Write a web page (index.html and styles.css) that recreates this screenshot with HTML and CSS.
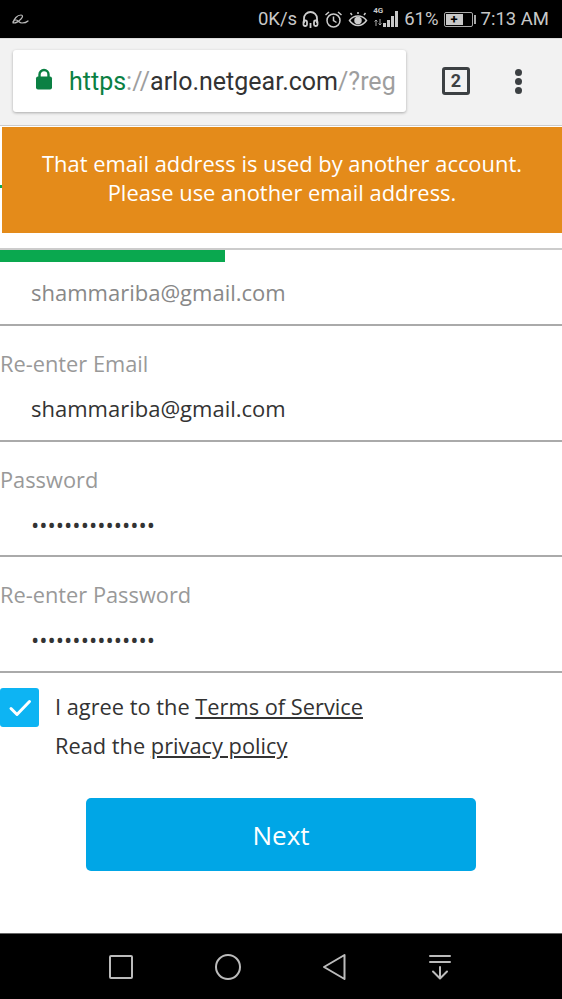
FILE: index.html
```html
<!DOCTYPE html>
<html lang="en">
<head>
  <meta charset="UTF-8" />
  <meta name="viewport" content="width=device-width, initial-scale=1.0"/>
  <title>Arlo Registration</title>
  <link rel="stylesheet" href="styles.css">
</head>
<body>
  <div class="phone">
    <div class="statusBar">
      <svg class="appIcon" width="18" height="12" viewBox="0 0 18 12" fill="none" stroke="#bbb" stroke-width="1.2" stroke-linecap="round">
        <path d="M1 10C2 6 5 2 9 2c2 0 2 2 0 4-2 2-5 4-7 4s-1-3 2-3c2 0 3 3 6 3 2 0 5-1 6-2"/>
      </svg>
      <div class="statusRight">
        <span class="speed">0K/s</span>
        <svg width="17" height="19" viewBox="0 0 17 19" fill="none" stroke="#ccc" stroke-width="1.8">
          <path d="M2 13V8.500a6.500 6.500 0 0 1 13 0V13"/>
          <rect x="1.500" y="10.500" width="3.500" height="5.500" rx="1.500"/>
          <rect x="12" y="10.500" width="3.500" height="5.500" rx="1.500"/>
          <path d="M8.500 13v5"/>
        </svg>
        <svg width="19" height="19" viewBox="0 0 19 19" fill="none" stroke="#ccc" stroke-width="1.5">
          <circle cx="9.500" cy="10.500" r="6.500"/>
          <path d="M9.500 6.500v4l3 2M1.500 5l3.500-3M17.500 5L14 2"/>
        </svg>
        <svg width="20" height="16" viewBox="0 0 20 16" fill="none" stroke="#ccc" stroke-width="1.500">
          <path d="M1.500 9.500C4 6 7 5 10 5s6 1 8.500 4.500C16 13 13 14.500 10 14.500S4 13 1.500 9.500z"/>
          <circle cx="10" cy="9.500" r="3" fill="#ccc"/>
          <path d="M4 4L2.500 2M10 3V1M16 4l1.500-2"/>
        </svg>
        <span class="signal">
          <span class="netType">4G</span>
          <svg class="netArrows" width="8" height="7" viewBox="0 0 8 7" fill="none" stroke="#aaa" stroke-width="1">
            <path d="M2 7V1M0.500 2.500L2 1l1.500 1.500M6 0v6M4.500 4.500L6 6l1.500-1.500"/>
          </svg>
          <span class="bars"><i class="b1"></i><i class="b2"></i><i class="b3"></i><i class="b4"></i></span>
        </span>
        <span class="percent">61%</span>
        <span class="battery"><span class="batteryBody"><span class="batteryFill">+</span></span><span class="batteryTip"></span></span>
        <span class="clock">7:13 AM</span>
      </div>
    </div>

    <div class="toolbar">
      <div class="urlBox">
        <svg class="lock" width="18" height="22" viewBox="0 0 18 22">
          <path d="M4.500 10V6.500a4.500 4.500 0 0 1 9 0V10" fill="none" stroke="#0b8043" stroke-width="2.400"/>
          <rect x="1" y="8.500" width="16" height="13" rx="2" fill="#0b8043"/>
        </svg>
        <span class="url"><span class="scheme">https</span><span class="slashes">://</span>arlo.netgear.com<span class="path">/?reg</span></span>
      </div>
      <div class="tabCount">2</div>
      <div class="menuDots"><i></i><i></i><i></i></div>
    </div>

    <main class="page">
      <div class="alert">That email address is used by another account.<br>Please use another email address.</div>
      <div class="progressTick"></div>

      <div class="progress"><div class="progressBar"></div></div>

      <div class="field first">
        <div class="value muted">shammariba@gmail.com</div>
      </div>
      <div class="field">
        <label>Re-enter Email</label>
        <div class="value">shammariba@gmail.com</div>
      </div>
      <div class="field">
        <label>Password</label>
        <div class="value dots">•••••••••••••••</div>
      </div>
      <div class="field">
        <label>Re-enter Password</label>
        <div class="value dots">•••••••••••••••</div>
      </div>

      <div class="agree">
        <div class="checkbox">
          <svg width="24" height="20" viewBox="0 0 24 20" fill="none" stroke="#fff" stroke-width="3" stroke-linecap="round" stroke-linejoin="round">
            <path d="M3 10.500l6 6L21.500 3.500"/>
          </svg>
        </div>
        <div class="agreeText">
          <div class="agreeLine">I agree to the <a href="#">Terms of Service</a></div>
          <div class="agreeLine">Read the <a href="#">privacy policy</a></div>
        </div>
      </div>

      <button class="next" type="button">Next</button>
    </main>

    <div class="navBar">
      <svg width="26" height="26" viewBox="0 0 26 26" fill="none" stroke="#bbb" stroke-width="2" stroke-linejoin="round">
        <rect x="2" y="2" width="22" height="22" rx="1"/>
      </svg>
      <svg width="28" height="28" viewBox="0 0 28 28" fill="none" stroke="#bbb" stroke-width="2">
        <circle cx="14" cy="14" r="12"/>
      </svg>
      <svg width="26" height="28" viewBox="0 0 26 28" fill="none" stroke="#bbb" stroke-width="2" stroke-linejoin="round">
        <path d="M22.500 2L2 14l20.500 12z"/>
      </svg>
      <svg width="24" height="28" viewBox="0 0 24 28" fill="none" stroke="#bbb" stroke-width="2" stroke-linecap="round" stroke-linejoin="round">
        <path d="M2 3h20M2 9h20M12 14v11M5 18.500l7 7 7-7"/>
      </svg>
    </div>
  </div>
</body>
</html>
```

FILE: styles.css
```css
* {
  box-sizing: border-box;
}
body {
  margin: 0;
  background: #fff;
  font-family: "Open Sans", sans-serif;
  color: #333;
}
.phone {
  width: 562px;
  height: 999px;
  display: flex;
  flex-direction: column;
  overflow: hidden;
}

/* status bar */
.statusBar {
  height: 38px;
  flex: none;
  background: #000;
  display: flex;
  align-items: center;
  justify-content: space-between;
  padding: 0 13px 0 12px;
  font-family: Roboto, sans-serif;
  color: #c8c8c8;
}
.statusRight {
  display: flex;
  align-items: center;
  gap: 5px;
}
.speed, .percent, .clock {
  font-size: 18.5px;
  line-height: 38px;
}
.signal {
  width: 26px;
  height: 20px;
  margin-top: -4px;
  display: flex;
  align-items: flex-end;
  position: relative;
}
.netType {
  position: absolute;
  left: 0;
  top: -1px;
  font-size: 8px;
  line-height: 10px;
  font-weight: bold;
}
.netArrows {
  position: absolute;
  left: 1px;
  bottom: 1px;
}
.bars {
  margin-left: 10px;
  display: flex;
  align-items: flex-end;
  gap: 1.5px;
}
.bars i {
  display: block;
  width: 2.500px;
  background: #c8c8c8;
}
.b1 { height: 4px; }
.b2 { height: 7px; }
.b3 { height: 11px; }
.b4 { height: 16px; }
.battery {
  display: flex;
  align-items: center;
  gap: 1px;
}
.batteryBody {
  width: 29px;
  height: 15px;
  border: 1px solid #aaa;
  border-radius: 2px;
  padding: 1px;
  display: flex;
}
.batteryFill {
  width: 17px;
  background: #c8c8c8;
  color: #000;
  font-size: 13px;
  line-height: 11px;
  font-weight: bold;
  text-align: center;
}
.batteryTip {
  width: 2px;
  height: 9px;
  background: #aaa;
}

/* browser toolbar */
.toolbar {
  height: 88px;
  flex: none;
  background: #f2f2f2;
  border-top: 1px solid #ddd;
  border-bottom: 1px solid #ccc;
  display: flex;
  align-items: center;
  padding: 0 0 2px 13px;
  font-family: Roboto, sans-serif;
}
.urlBox {
  width: 393px;
  height: 62px;
  background: #fff;
  border-radius: 3px;
  box-shadow: 0 1px 3px rgba(0, 0, 0, 0.3);
  display: flex;
  align-items: center;
  padding-left: 22px;
  overflow: hidden;
}
.lock {
  flex: none;
  margin-top: -4px;
}
.url {
  margin-left: 16px;
  font-size: 25px;
  color: #333;
  white-space: nowrap;
}
.scheme {
  color: #0b8043;
}
.slashes, .path {
  color: #9e9e9e;
}
.tabCount {
  width: 28px;
  height: 28px;
  margin-left: 36px;
  border: 3px solid #3c4043;
  border-radius: 3px;
  font-size: 18px;
  line-height: 22px;
  font-weight: bold;
  text-align: center;
  color: #3c4043;
}
.menuDots {
  margin-left: 45px;
  display: flex;
  flex-direction: column;
  gap: 2px;
}
.menuDots i {
  display: block;
  width: 7px;
  height: 7px;
  border-radius: 50%;
  background: #3c4043;
}

/* page */
.page {
  flex: 1;
  position: relative;
  padding-top: 122px;
  background: #fff;
}
.alert {
  position: absolute;
  left: 2px;
  top: 1px;
  right: 0;
  height: 106px;
  background: #e48b1a;
  color: #fff;
  font-size: 21.9px;
  line-height: 29px;
  text-align: center;
  padding-top: 22px;
}
.progressTick {
  position: absolute;
  left: 0;
  top: 59px;
  width: 2px;
  height: 3px;
  background: #0aa84f;
}
.progress {
  height: 14px;
  border-top: 2px solid #ccc;
}
.progressBar {
  width: 225px;
  height: 12px;
  background: #0aa84f;
}
.field {
  height: 115.5px;
  border-bottom: 2px solid #aaa;
  padding-top: 24px;
}
.field.first {
  height: 64px;
  padding-top: 16px;
}
.field label {
  display: block;
  font-size: 21.8px;
  line-height: 27px;
  color: #999;
}
.value {
  margin-top: 17px;
  padding-left: 31px;
  font-size: 22px;
  line-height: 28px;
  color: #333;
}
.field.first .value {
  margin-top: 0;
}
.value.muted {
  color: #888;
}
.agree {
  display: flex;
  gap: 16px;
  padding-top: 15.5px;
}
.checkbox {
  width: 39px;
  height: 39px;
  flex: none;
  background: #0db4f3;
  border-radius: 3px;
  display: flex;
  align-items: center;
  justify-content: center;
}
.agreeText {
  margin-top: -1px;
}
.agreeLine {
  font-size: 21.8px;
  line-height: 39px;
  color: #333;
}
.agreeLine a {
  color: #333;
  text-decoration: underline;
}
.next {
  display: block;
  width: 390px;
  height: 73px;
  margin: 33px 0 0 86px;
  background: #00a6e6;
  color: #fff;
  border: none;
  border-radius: 5px;
  font-family: "Open Sans", sans-serif;
  font-size: 26px;
  cursor: pointer;
}

/* android nav */
.navBar {
  height: 66px;
  flex: none;
  background: #000;
  border-top: 1px solid #666;
  display: flex;
  align-items: center;
  padding-left: 108px;
  gap: 80px;
}
```
